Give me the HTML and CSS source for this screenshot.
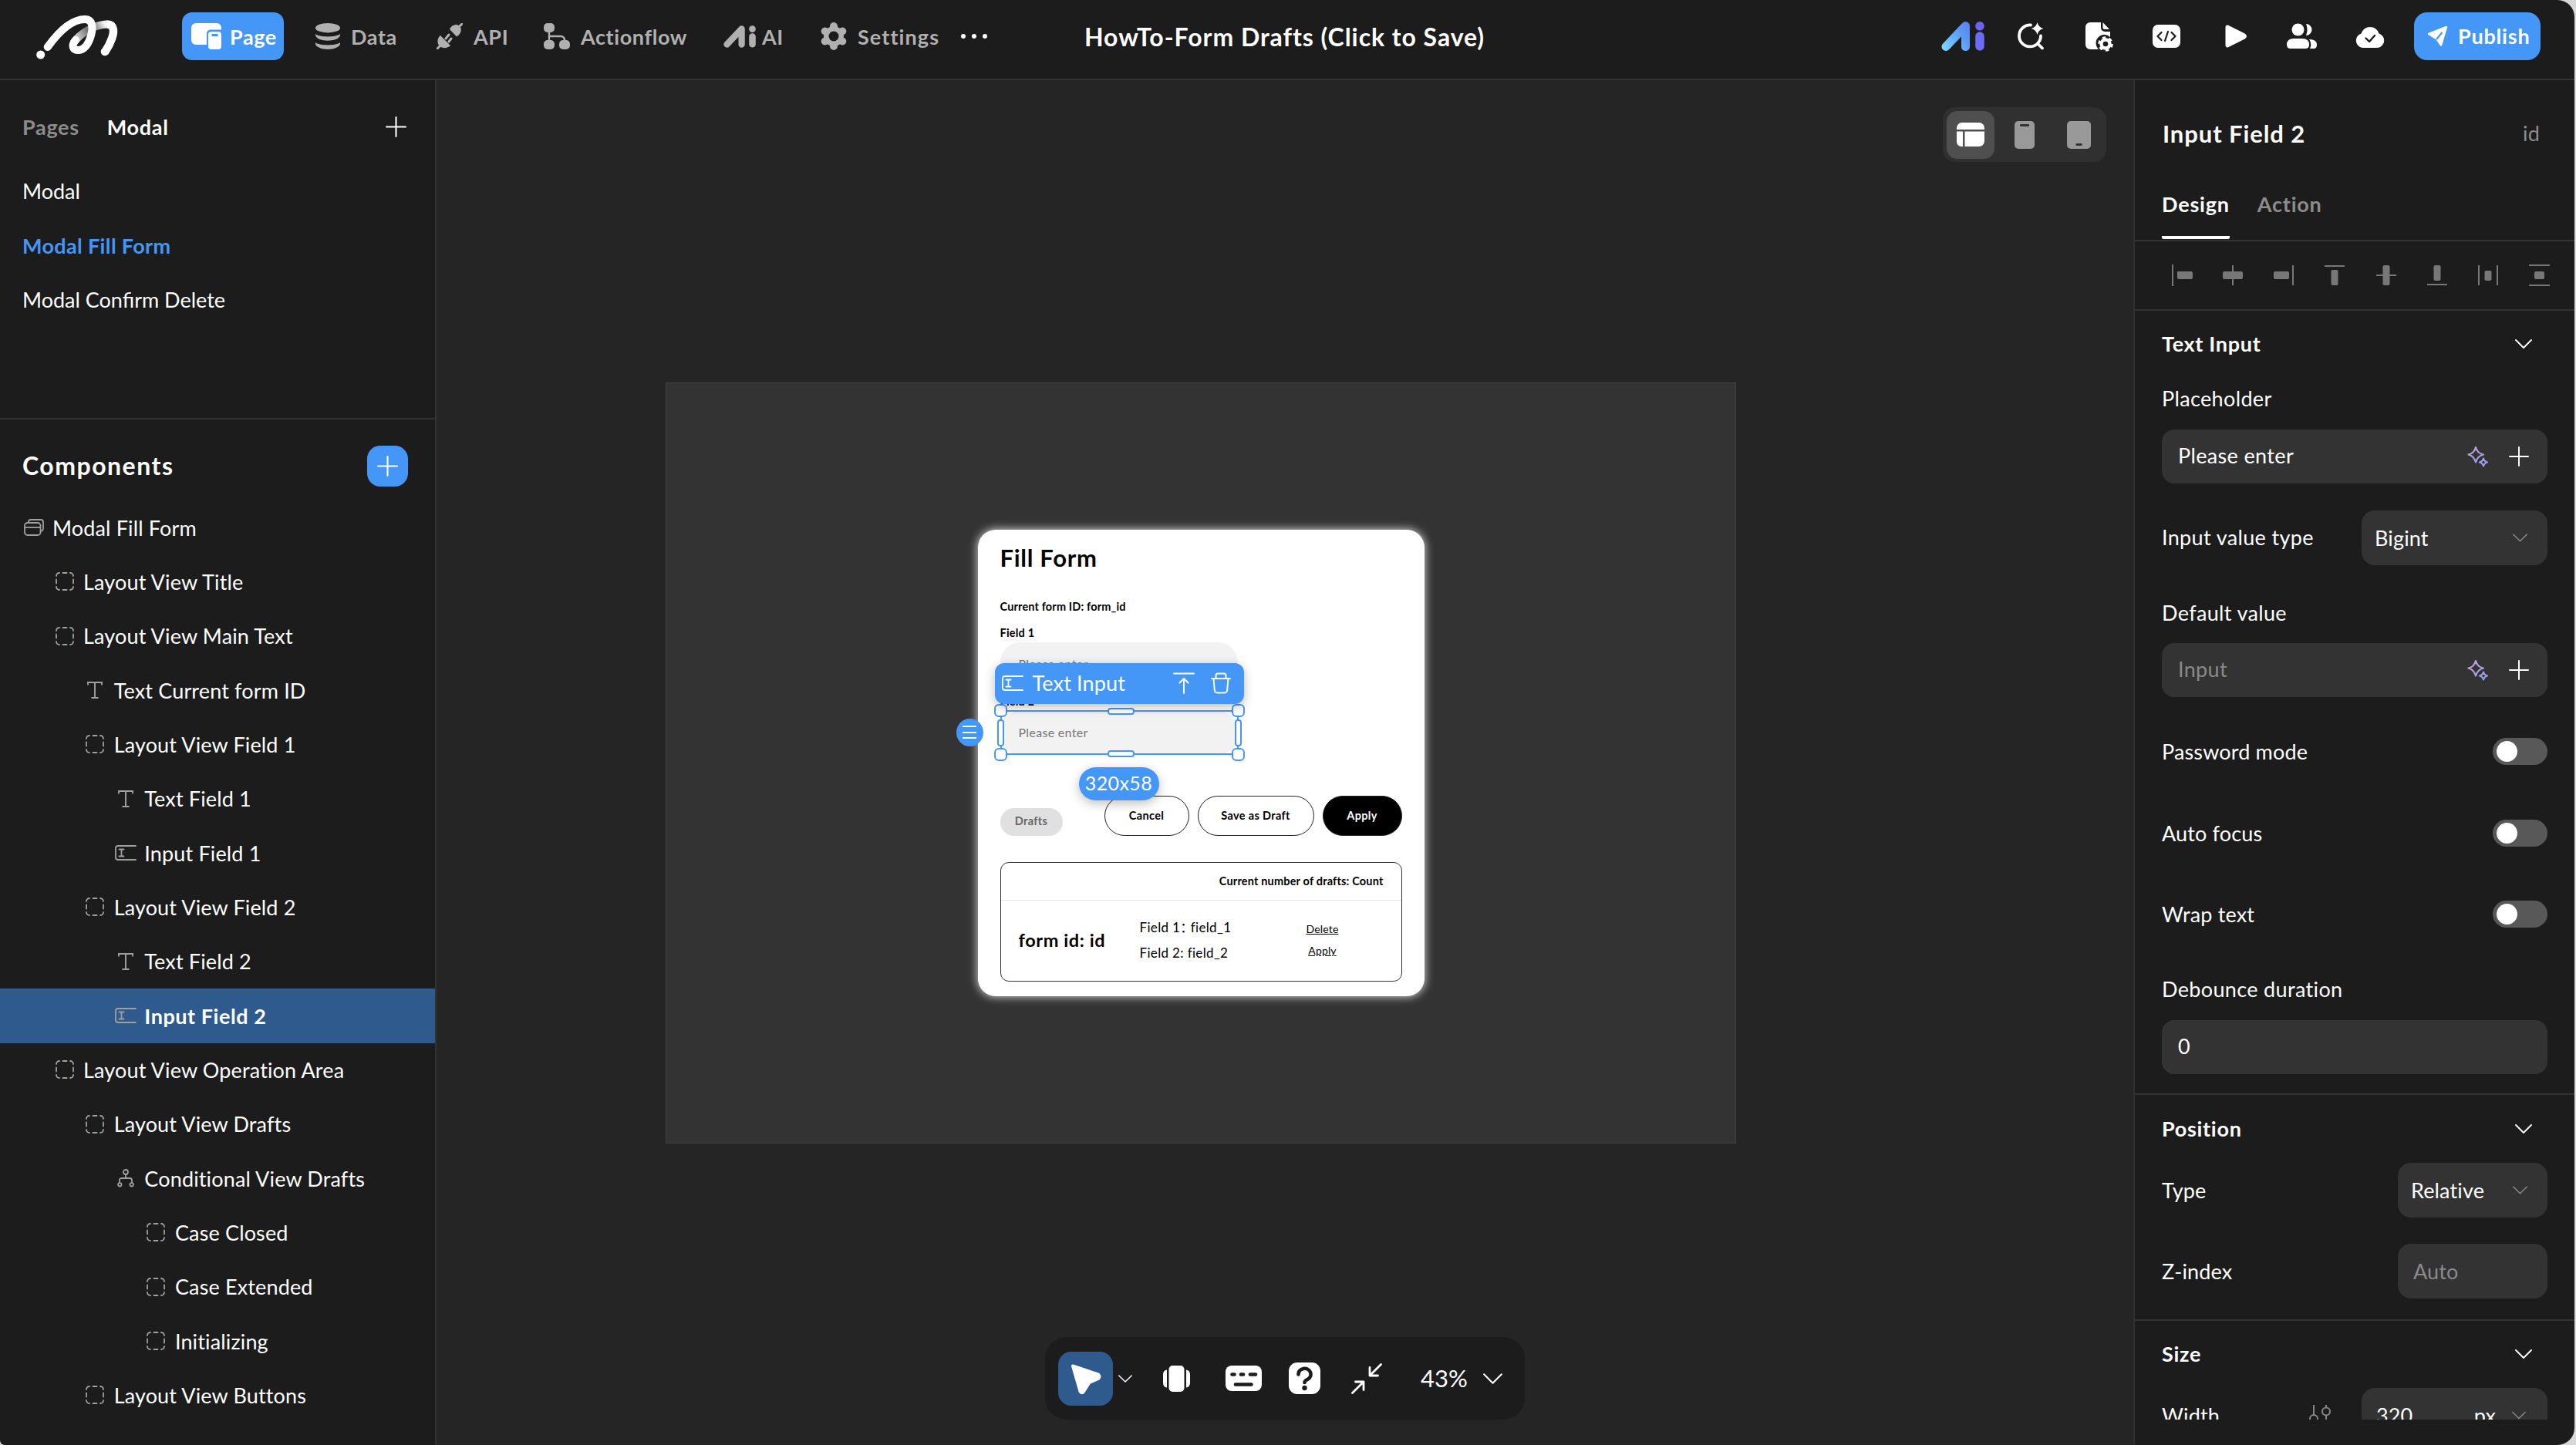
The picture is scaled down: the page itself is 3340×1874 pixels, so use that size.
FILE: index.html
```html
<!DOCTYPE html>
<html lang="en">
<head>
  <meta charset="UTF-8">
  <title>HowTo-Form Drafts</title>
  <link rel="stylesheet" href="styles.css">
</head>
<body>
  <svg class="defs" width="0" height="0">
    <defs>
      <linearGradient id="aiGrad" gradientUnits="userSpaceOnUse" x1="0" y1="38" x2="56" y2="0">
        <stop offset="0" stop-color="#7fdcff"/>
        <stop offset="0.5" stop-color="#5a9bf5"/>
        <stop offset="1" stop-color="#6f5cf2"/>
      </linearGradient>
      <linearGradient id="sparkGrad" x1="0" y1="0" x2="1" y2="1">
        <stop offset="0" stop-color="#c9a0dc"/>
        <stop offset="1" stop-color="#8f9bea"/>
      </linearGradient>
      <linearGradient id="foldGrad" gradientUnits="userSpaceOnUse" x1="50" y1="42" x2="94" y2="17">
        <stop offset="0" stop-color="#fff"/>
        <stop offset="0.5" stop-color="#777"/>
        <stop offset="0.75" stop-color="#999"/>
        <stop offset="1" stop-color="#fff"/>
      </linearGradient>
    </defs>
    <symbol id="i-ai" viewBox="0 0 56 38">
      <path d="M6 32.500L31.500 5.500V32.500" fill="none" stroke="currentColor" stroke-width="11" stroke-linecap="round" stroke-linejoin="round"/>
      <path d="M50 19V32" stroke="currentColor" stroke-width="11.500" stroke-linecap="round"/>
      <circle cx="50" cy="5.800" r="5.800" fill="currentColor"/>
    </symbol>
    <symbol id="i-layout" viewBox="0 0 24 24">
      <path d="M9.500 1h5M9.500 23h5M1 9.500v5M23 9.500v5M1 5a4 4 0 0 1 4-4M19 1a4 4 0 0 1 4 4M23 19a4 4 0 0 1-4 4M5 23a4 4 0 0 1-4-4" fill="none" stroke="currentColor" stroke-width="1.800" stroke-linecap="round"/>
    </symbol>
    <symbol id="i-text" viewBox="0 0 24 24">
      <path d="M3 5.500V2h18v3.500M12 2v20M7.500 22h9" fill="none" stroke="currentColor" stroke-width="1.900"/>
    </symbol>
    <symbol id="i-input" viewBox="0 0 28 20">
      <path d="M27 1H4a3 3 0 0 0-3 3v12a3 3 0 0 0 3 3h23M5.500 5.500h6M5.500 14.500h6M8.500 5.500v9" fill="none" stroke="currentColor" stroke-width="1.800" stroke-linecap="round"/>
    </symbol>
    <symbol id="i-modal" viewBox="0 0 26 22">
      <path d="M6 4.500V4a3 3 0 0 1 3-3h13a3 3 0 0 1 3 3v8a4 4 0 0 1-3.500 4" fill="none" stroke="currentColor" stroke-width="1.800"/>
      <rect x="1" y="5" width="20.500" height="16" rx="3.500" fill="none" stroke="currentColor" stroke-width="1.800"/>
      <path d="M1 11h20" stroke="currentColor" stroke-width="1.800"/>
    </symbol>
    <symbol id="i-cond" viewBox="0 0 22 24">
      <path d="M11 7v5M3 18v-3.500A2.500 2.500 0 0 1 5.500 12h11a2.500 2.500 0 0 1 2.500 2.500V18" fill="none" stroke="currentColor" stroke-width="1.800"/>
      <circle cx="11" cy="4" r="3" fill="none" stroke="currentColor" stroke-width="1.800"/>
      <circle cx="3.300" cy="20.300" r="2.200" fill="none" stroke="currentColor" stroke-width="1.800"/>
      <circle cx="18.700" cy="20.300" r="2.200" fill="none" stroke="currentColor" stroke-width="1.800"/>
    </symbol>
    <symbol id="i-plus" viewBox="0 0 26 26">
      <path d="M13 1v24M1 13h24" stroke="currentColor" stroke-width="2" stroke-linecap="round"/>
    </symbol>
    <symbol id="i-chevron" viewBox="0 0 22 12">
      <path d="M1 1l10 10L21 1" fill="none" stroke="currentColor" stroke-width="1.800" stroke-linecap="round" stroke-linejoin="round"/>
    </symbol>
    <symbol id="i-spark" viewBox="0 0 28 28">
      <path d="M11 2Q13 10 21 11.500Q13 13.500 11 21.500Q9 13.500 1.500 11.500Q9 10 11 2ZM21 16.500Q22 20.500 26 21.500Q22 22.500 21 26.500Q20 22.500 16 21.500Q20 20.500 21 16.500Z" fill="none" stroke="url(#sparkGrad)" stroke-width="2.200" stroke-linejoin="round"/>
    </symbol>
  </svg>

  <div class="app">
    <header class="topbar">
      <svg class="logo" width="112" height="64" viewBox="0 0 112 64">
        <path d="M51 41C58 31 74 18 94 16.500" fill="none" stroke="url(#foldGrad)" stroke-width="10"/>
        <path d="M17.700 46C30 29 47 10 66 10C76 10 77 20 74 31C71 42 65 50 58 50C50 50 48 44 54 37" fill="none" stroke="#fff" stroke-width="10" stroke-linecap="round"/>
        <path d="M94 16.500C105 16 104 27 101 35Q98 44 92 52.500" fill="none" stroke="#fff" stroke-width="10.500"/>
        <circle cx="92" cy="52" r="5.300" fill="#fff"/>
        <circle cx="8.700" cy="56" r="5.500" fill="#fff"/>
      </svg>

      <nav class="nav">
        <a class="nav-item active">
          <svg width="40" height="34" viewBox="0 0 40 34">
            <path d="M6 0H33a6 6 0 0 1 6 6V8.500H25a5 5 0 0 0-5 5V28H6a6 6 0 0 1-6-6V6a6 6 0 0 1 6-6Z" fill="#fff"/>
            <path fill-rule="evenodd" d="M26 11H35a4 4 0 0 1 4 4V30a4 4 0 0 1-4 4H26a4 4 0 0 1-4-4V15a4 4 0 0 1 4-4ZM26.500 14v3h8v-3Z" fill="#fff"/>
          </svg>
          <span>Page</span>
        </a>
        <a class="nav-item">
          <svg width="32" height="34" viewBox="0 0 32 34" fill="currentColor">
            <ellipse cx="16" cy="6.200" rx="16" ry="6.200"/>
            <path d="M0 14C4 18.500 28 18.500 32 14C34 25.500-2 25.500 0 14ZM0 25C4 29.500 28 29.500 32 25C34 37-2 37 0 25Z"/>
          </svg>
          <span>Data</span>
        </a>
        <a class="nav-item">
          <svg width="34" height="34" viewBox="0 0 34 34" fill="currentColor">
            <path d="M33 1l-4 4M1 33l4-4M12 20l4-5M16 24l3-4" stroke="currentColor" stroke-width="3" stroke-linecap="round"/>
            <path d="M17 8C19 2 27 0 30 4C34 8 31 15 26 17.500ZM5 16L18 29C14 33 8 33 4 30C0 26 1 19 5 16Z"/>
          </svg>
          <span>API</span>
        </a>
        <a class="nav-item">
          <svg width="34" height="34" viewBox="0 0 34 34" fill="currentColor">
            <rect x="0" y="0" width="14" height="12" rx="5"/>
            <rect x="0" y="22" width="14" height="12" rx="5"/>
            <rect x="20" y="22" width="14" height="12" rx="5"/>
            <path d="M7 8V26M7 17H22a5 5 0 0 1 5 5V25" fill="none" stroke="currentColor" stroke-width="2.400"/>
          </svg>
          <span>Actionflow</span>
        </a>
        <a class="nav-item ai">
          <svg width="42" height="29"><use href="#i-ai"/></svg>
          <span>AI</span>
        </a>
        <a class="nav-item settings">
          <svg width="36" height="36" viewBox="0 0 36 36">
            <path d="M18 5V31M6.700 11.500L29.300 24.500M6.700 24.500L29.300 11.500" stroke="currentColor" stroke-width="10" stroke-linecap="round"/>
            <circle cx="18" cy="18" r="13" fill="currentColor"/>
            <circle cx="18" cy="18" r="6.500" fill="#1c1c1c"/>
          </svg>
          <span>Settings</span>
        </a>
        <a class="more"><i></i><i></i><i></i></a>
      </nav>

      <h1 class="project-title">HowTo-Form Drafts (Click to Save)</h1>

      <div class="tools">
        <svg width="56" height="38" viewBox="0 0 56 38">
          <path d="M6 32.500L31.500 5.500V32.500" fill="none" stroke="url(#aiGrad)" stroke-width="11" stroke-linecap="round" stroke-linejoin="round"/>
          <path d="M50 19V32" stroke="#6b6cf5" stroke-width="11.500" stroke-linecap="round"/>
          <circle cx="50" cy="5.800" r="5.800" fill="#6b63f3"/>
        </svg>
        <svg width="56" height="40" viewBox="0 0 56 40">
          <path d="M28 5.500A14 14 0 1 0 41 19.500M37 29.500l6 6" fill="none" stroke="#fff" stroke-width="3.800" stroke-linecap="round"/>
          <path d="M36.500 2Q38 8.500 44.500 10Q38 11.500 36.500 18Q35 11.500 28.500 10Q35 8.500 36.500 2Z" fill="#fff"/>
        </svg>
        <svg width="56" height="40" viewBox="0 0 56 40">
          <path d="M17 2H31V9a5 5 0 0 0 5 5H43V21A10 10 0 0 0 28 37H17a6 6 0 0 1-6-6V8a6 6 0 0 1 6-6Z" fill="#fff"/>
          <path d="M33.500 2L42 11H36a2.500 2.500 0 0 1-2.500-2.500Z" fill="#fff"/>
          <circle cx="37" cy="30" r="5.500" fill="none" stroke="#fff" stroke-width="4.400"/>
          <circle cx="37" cy="30" r="8.500" fill="none" stroke="#fff" stroke-width="2.600" stroke-dasharray="4.450 4.450"/>
        </svg>
        <svg width="56" height="40" viewBox="0 0 56 40">
          <rect x="10" y="5" width="36" height="30" rx="7" fill="#fff"/>
          <path d="M21.500 15l-5 5 5 5M34.500 15l5 5-5 5M30 14l-4 12" fill="none" stroke="#1c1c1c" stroke-width="2.200" stroke-linecap="round" stroke-linejoin="round"/>
        </svg>
        <svg width="56" height="40" viewBox="0 0 56 40">
          <path d="M19 8L40 18.500Q43 20 40 21.500L19 32Z" fill="#fff" stroke="#fff" stroke-width="5" stroke-linejoin="round"/>
        </svg>
        <svg width="56" height="40" viewBox="0 0 56 40" fill="#fff">
          <circle cx="22.500" cy="11.500" r="8"/>
          <path d="M8 31q0-8 9-8h11q9 0 9 8 0 5-5 5H13q-5 0-5-5Z"/>
          <path d="M33 4a7.500 7.500 0 0 1 0 15q3-7.500 0-15ZM37 24q10 0 10 7 0 5-4 5h-5q3-6-1-12Z"/>
        </svg>
        <svg width="56" height="40" viewBox="0 0 56 40">
          <path d="M18 35a9.500 9.500 0 0 1-1.500-18.500A12 12 0 0 1 39.500 16.500A9.500 9.500 0 0 1 38 35Z" fill="#fff"/>
          <path d="M22.500 22.500l4.500 4.500 7-8" fill="none" stroke="#1c1c1c" stroke-width="2.400" stroke-linecap="round" stroke-linejoin="round"/>
        </svg>
        <button class="publish">
          <svg width="28" height="28" viewBox="0 0 28 28">
            <path d="M2 11L25 2 18 25.500 12.500 17.500Z" fill="#fff" stroke="#fff" stroke-width="2.500" stroke-linejoin="round"/>
            <path d="M12.500 17.500L19 9.500" stroke="#4597f7" stroke-width="2" stroke-linecap="round"/>
          </svg>
          Publish
        </button>
      </div>
    </header>

    <div class="workspace">
      <aside class="sidebar">
        <section class="pages">
          <div class="pages-tabs">
            <span class="tab-off">Pages</span>
            <span class="tab-on">Modal</span>
            <svg class="add" width="27" height="27"><use href="#i-plus"/></svg>
          </div>
          <div class="page-row">Modal</div>
          <div class="page-row current">Modal Fill Form</div>
          <div class="page-row">Modal Confirm Delete</div>
        </section>

        <section class="components">
          <div class="components-head">
            <h2>Components</h2>
            <button class="add-btn"><svg width="27" height="27"><use href="#i-plus"/></svg></button>
          </div>
          <div class="tree">
            <div class="node"><svg width="26" height="22"><use href="#i-modal"/></svg>Modal Fill Form</div>
            <div class="node d1"><svg width="24" height="24"><use href="#i-layout"/></svg>Layout View Title</div>
            <div class="node d1"><svg width="24" height="24"><use href="#i-layout"/></svg>Layout View Main Text</div>
            <div class="node d2"><svg width="24" height="24"><use href="#i-text"/></svg>Text Current form ID</div>
            <div class="node d2"><svg width="24" height="24"><use href="#i-layout"/></svg>Layout View Field 1</div>
            <div class="node d3"><svg width="24" height="24"><use href="#i-text"/></svg>Text Field 1</div>
            <div class="node d3"><svg width="28" height="20"><use href="#i-input"/></svg>Input Field 1</div>
            <div class="node d2"><svg width="24" height="24"><use href="#i-layout"/></svg>Layout View Field 2</div>
            <div class="node d3"><svg width="24" height="24"><use href="#i-text"/></svg>Text Field 2</div>
            <div class="node d3 selected"><svg width="28" height="20"><use href="#i-input"/></svg>Input Field 2</div>
            <div class="node d1"><svg width="24" height="24"><use href="#i-layout"/></svg>Layout View Operation Area</div>
            <div class="node d2"><svg width="24" height="24"><use href="#i-layout"/></svg>Layout View Drafts</div>
            <div class="node d3"><svg width="22" height="24"><use href="#i-cond"/></svg>Conditional View Drafts</div>
            <div class="node d4"><svg width="24" height="24"><use href="#i-layout"/></svg>Case Closed</div>
            <div class="node d4"><svg width="24" height="24"><use href="#i-layout"/></svg>Case Extended</div>
            <div class="node d4"><svg width="24" height="24"><use href="#i-layout"/></svg>Initializing</div>
            <div class="node d2"><svg width="24" height="24"><use href="#i-layout"/></svg>Layout View Buttons</div>
          </div>
        </section>
      </aside>

      <main class="canvas">
        <div class="devices">
          <span class="device on">
            <svg width="36" height="32" viewBox="0 0 36 32" fill="#fff">
              <path d="M7 0H29a7 7 0 0 1 7 7V9H0V7A7 7 0 0 1 7 0ZM0 11.500H8V31H6a6 6 0 0 1-6-6ZM10.500 11.500H36V24a7 7 0 0 1-7 7H10.500Z"/>
            </svg>
          </span>
          <span class="device">
            <svg width="26" height="36" viewBox="0 0 26 36"><rect width="26" height="36" rx="5" fill="#999"/><rect x="7" y="4" width="12" height="3" rx="1" fill="#333"/></svg>
          </span>
          <span class="device">
            <svg width="31" height="36" viewBox="0 0 31 36"><rect width="31" height="36" rx="5" fill="#999"/><rect x="11.500" y="29" width="8" height="3" rx="1" fill="#333"/></svg>
          </span>
        </div>

        <div class="artboard">
          <div class="modal">
            <h3 class="modal-title">Fill Form</h3>
            <div class="label form-id">Current form ID: form_id</div>
            <div class="label">Field 1</div>
            <div class="field">Please enter</div>
            <div class="label second">Field 2</div>
            <div class="field">Please enter</div>
            <div class="actions">
              <span class="chip">Drafts</span>
              <span class="pill cancel">Cancel</span>
              <span class="pill save">Save as Draft</span>
              <span class="pill apply">Apply</span>
            </div>
            <div class="drafts">
              <div class="drafts-head">Current number of drafts: Count</div>
              <div class="drafts-row">
                <strong>form id: id</strong>
                <div class="draft-fields">
                  <div>Field 1：<span>field_1</span></div>
                  <div>Field 2: field_2</div>
                </div>
                <div class="draft-links">
                  <u>Delete</u>
                  <u>Apply</u>
                </div>
              </div>
            </div>

            <!-- selection overlay -->
            <div class="selection">
              <i class="bar top"></i><i class="bar bottom"></i>
              <i class="side left"></i><i class="side right"></i>
              <i class="knob nw"></i><i class="knob ne"></i>
              <i class="knob sw"></i><i class="knob se"></i>
            </div>
            <div class="sel-toolbar">
              <svg width="28" height="20"><use href="#i-input"/></svg>
              <span>Text Input</span>
              <svg class="up" width="28" height="28" viewBox="0 0 28 28"><path d="M1 1.500h26M14 27V8.500M8.500 13.500L14 8l5.500 5.500" fill="none" stroke="#fff" stroke-width="2" stroke-linecap="round" stroke-linejoin="round"/></svg>
              <svg width="26" height="28" viewBox="0 0 26 28"><path d="M1 8h24M6.500 8V4a2.500 2.500 0 0 1 2.500-2.500h8a2.500 2.500 0 0 1 2.500 2.500v4M3.500 8l1.300 15a4 4 0 0 0 4 3.500h8.400a4 4 0 0 0 4-3.500L22.500 8" fill="none" stroke="#fff" stroke-width="2" stroke-linecap="round"/></svg>
            </div>
            <div class="sel-menu"><i></i><i></i><i></i></div>
            <div class="sel-size">320x58</div>
          </div>
        </div>

        <div class="dock">
          <span class="dock-active">
            <svg width="42" height="42" viewBox="0 0 42 42"><path d="M4 4.500L37 15.500Q40 18 37 21L25.500 26 17.500 38.500Q15 40 13.500 37.500Z" fill="#fff" stroke="#fff" stroke-width="4" stroke-linejoin="round"/></svg>
          </span>
          <svg class="dock-caret" width="18" height="10"><use href="#i-chevron"/></svg>
          <svg class="dock-frame" width="35" height="34" viewBox="0 0 35 34" fill="#fff"><rect x="7.500" width="20" height="34" rx="5"/><path d="M5 5.500V28.500C1 28 0 25 0 22V12C0 9 1 6 5 5.500ZM30 5.500V28.500C34 28 35 25 35 22V12C35 9 34 6 30 5.500Z"/></svg>
          <svg class="dock-keys" width="47" height="33" viewBox="0 0 47 33">
            <rect width="47" height="33" rx="8" fill="#fff"/>
            <path d="M8.500 11.500h3M20 11.500h3M32 11.500h7M13 24.500h20.500" stroke="#1c1c1c" stroke-width="4.600" stroke-linecap="round"/>
          </svg>
          <svg class="dock-help" width="41" height="41" viewBox="0 0 41 41">
            <rect width="41" height="41" rx="11" fill="#fff"/>
            <path d="M12.500 15.500a8 7.500 0 1 1 12 6.300Q20.500 23.500 20.500 26" fill="none" stroke="#1c1c1c" stroke-width="4.600" stroke-linecap="round"/>
            <circle cx="20.500" cy="33" r="3.200" fill="#1c1c1c"/>
          </svg>
          <svg class="dock-fit" width="40" height="40" viewBox="0 0 40 40"><path d="M38.500 1.500L24 16M24 5.500V16H34.500M1.500 38.500L16 24M16 34.500V24H5.500" fill="none" stroke="#fff" stroke-width="2.800" stroke-linecap="round" stroke-linejoin="round"/></svg>
          <span class="zoom">43%</span>
          <svg width="25" height="14"><use href="#i-chevron"/></svg>
        </div>
      </main>

      <aside class="inspector">
        <div class="insp-scroll">
          <div class="insp-title"><h2>Input Field 2</h2><span>id</span></div>
          <div class="insp-tabs"><span class="on">Design</span><span>Action</span></div>
          <div class="align">
            <svg width="28" height="28" viewBox="0 0 28 28"><path d="M1 0h2v28H1zM8 9h18a2 2 0 0 1 2 2v6a2 2 0 0 1-2 2H10a2 2 0 0 1-2-2z"/></svg>
            <svg width="28" height="28" viewBox="0 0 28 28"><rect x="13" y="1" width="2" height="26"/><rect x="1" y="9" width="26" height="10" rx="2"/></svg>
            <svg width="28" height="28" viewBox="0 0 28 28"><rect x="25" y="1" width="2" height="26"/><rect x="1" y="9" width="20" height="10" rx="2"/></svg>
            <svg width="28" height="28" viewBox="0 0 28 28"><rect x="1" y="1" width="26" height="2"/><rect x="9.500" y="7" width="9" height="20" rx="2"/></svg>
            <svg width="28" height="28" viewBox="0 0 28 28"><rect x="1" y="13" width="26" height="2"/><rect x="9.500" y="1" width="9" height="26" rx="2"/></svg>
            <svg width="28" height="28" viewBox="0 0 28 28"><rect x="1" y="25" width="26" height="2"/><rect x="9.500" y="1" width="9" height="20" rx="2"/></svg>
            <svg width="28" height="28" viewBox="0 0 28 28"><rect x="1" y="1" width="2" height="26"/><rect x="25" y="1" width="2" height="26"/><rect x="9.500" y="8" width="9" height="13" rx="2"/></svg>
            <svg width="28" height="28" viewBox="0 0 28 28"><rect x="1" y="0" width="27" height="2"/><rect x="1" y="26" width="27" height="2"/><rect x="8" y="9" width="13" height="10" rx="2"/></svg>
          </div>

          <section class="group text-input">
            <div class="group-head"><h3>Text Input</h3><svg width="22" height="12"><use href="#i-chevron"/></svg></div>
            <div class="prop-label">Placeholder</div>
            <div class="box"><span>Please enter</span><svg width="28" height="28"><use href="#i-spark"/></svg><svg width="26" height="26"><use href="#i-plus"/></svg></div>
            <div class="prop select-row"><span>Input value type</span><div class="select wide">Bigint<svg width="19" height="11"><use href="#i-chevron"/></svg></div></div>
            <div class="prop-label default">Default value</div>
            <div class="box empty"><span>Input</span><svg width="28" height="28"><use href="#i-spark"/></svg><svg width="26" height="26"><use href="#i-plus"/></svg></div>
            <div class="prop first-toggle"><span>Password mode</span><i class="toggle"></i></div>
            <div class="prop"><span>Auto focus</span><i class="toggle"></i></div>
            <div class="prop"><span>Wrap text</span><i class="toggle"></i></div>
            <div class="prop-label debounce">Debounce duration</div>
            <div class="box"><span>0</span></div>
          </section>

          <section class="group position">
            <div class="group-head"><h3>Position</h3><svg width="22" height="12"><use href="#i-chevron"/></svg></div>
            <div class="prop"><span>Type</span><div class="select">Relative<svg width="19" height="11"><use href="#i-chevron"/></svg></div></div>
            <div class="prop"><span>Z-index</span><div class="select auto">Auto</div></div>
          </section>

          <section class="group size">
            <div class="group-head"><h3>Size</h3><svg width="22" height="12"><use href="#i-chevron"/></svg></div>
            <div class="prop">
              <span>Width</span>
              <svg class="tune" width="28" height="30" viewBox="0 0 28 30" fill="none" stroke="#888" stroke-width="2"><path d="M6 1v13M6 24v5M22 1v4M22 14v15"/><circle cx="6" cy="19" r="5"/><circle cx="22" cy="9.500" r="5"/></svg>
              <div class="select wide width">320<b>px</b><svg width="18" height="11"><use href="#i-chevron"/></svg></div>
            </div>
          </section>
        </div>
      </aside>
    </div>
  </div>
</body>
</html>
```
FILE: styles.css
```css
* {
  box-sizing: border-box;
}

body {
  margin: 0;
  background: #d8d8d8;
  font-family: Lato, "Noto Sans CJK SC", sans-serif;
  font-size: 27px;
  letter-spacing: 0.15px;
  color: #fff;
  overflow: hidden;
}

h1, h2, h3 {
  margin: 0;
}

svg {
  display: block;
  flex: none;
}

button {
  border: none;
  padding: 0;
  color: #fff;
  font: inherit;
}

.defs {
  position: absolute;
}

.app {
  width: 3338px;
  height: 1874px;
  display: flex;
  flex-direction: column;
  background: #1c1c1c;
  border-radius: 0 22px 22px 6px;
  overflow: hidden;
}

/* top bar */
.topbar {
  height: 104px;
  flex: none;
  display: flex;
  align-items: center;
  padding: 0 44px 8px;
  border-bottom: 2px solid #333;
}

.logo {
  margin-right: 80px;
}

.nav {
  display: grid;
  grid-template-columns: 173px 157px 139px 233px 125px 183px 36px;
  align-items: center;
  color: #b0b0b0;
  font-weight: bold;
  letter-spacing: 0.6px;
}

.nav-item {
  display: flex;
  align-items: center;
  gap: 14px;
}

.nav-item.ai {
  gap: 8px;
}

.nav-item.settings {
  gap: 13px;
  letter-spacing: 1.1px;
}

.nav-item.active {
  width: 132px;
  height: 62px;
  padding-left: 12px;
  gap: 10px;
  border-radius: 13px;
  background: #4597f7;
  color: #fff;
}

.more {
  display: flex;
  gap: 8px;
}

.more i {
  width: 6px;
  height: 6px;
  border-radius: 50%;
  background: #fff;
}

.project-title {
  margin-left: 124px;
  width: 524px;
  font-size: 32px;
  letter-spacing: 0.95px;
  white-space: nowrap;
}

.tools {
  display: flex;
  align-items: center;
  gap: 32px;
  margin-left: auto;
}

.publish {
  width: 164px;
  height: 62px;
  margin-left: -3px;
  display: flex;
  align-items: center;
  padding: 0 0 1px 17px;
  gap: 12px;
  border-radius: 17px;
  background: #4597f7;
  font-weight: bold;
  letter-spacing: 0.8px;
}

/* left sidebar */
.workspace {
  flex: 1;
  display: flex;
  min-height: 0;
}

.sidebar {
  width: 566px;
  flex: none;
  border-right: 2px solid #333;
}

.pages {
  height: 440px;
  padding-top: 26px;
  border-bottom: 2px solid #333;
}

.pages-tabs {
  height: 71px;
  margin-bottom: 1px;
  padding: 0 37px 2px 29px;
  display: flex;
  align-items: center;
  gap: 36px;
  font-weight: bold;
  letter-spacing: 0.7px;
}

.tab-off {
  color: #8c8c8c;
}

.add {
  margin-left: auto;
}

.page-row {
  height: 70.500px;
  padding-left: 29px;
  line-height: 91px;
  letter-spacing: 0;
}

.current {
  color: #4597f7;
  font-weight: bold;
  letter-spacing: 0.35px;
}

.components-head {
  height: 105.500px;
  display: flex;
  align-items: center;
  justify-content: space-between;
  padding: 16px 35px 0 29px;
}

.components-head h2 {
  font-size: 32px;
  line-height: 36px;
  padding-bottom: 2px;
  letter-spacing: 1.500px;
}

.add-btn {
  width: 53px;
  height: 53px;
  display: flex;
  align-items: center;
  justify-content: center;
  border-radius: 17px;
  background: #4597f7;
}

.tree {
  --step: 39.600px;
}

.node {
  height: 70.330px;
  display: flex;
  align-items: center;
  padding-left: 68px;
  padding-bottom: 1px;
}

.node svg {
  width: 28px;
  margin-left: -38.500px;
  margin-right: 10.500px;
  color: #a0a0a0;
}

.d1 { padding-left: calc(68.500px + var(--step)); }
.d2 { padding-left: calc(68.500px + var(--step) * 2); }
.d3 { padding-left: calc(68.500px + var(--step) * 3); }
.d4 { padding-left: calc(68.500px + var(--step) * 4); }

.selected {
  background: #2f5a8d;
  font-weight: bold;
  letter-spacing: 0.55px;
}

/* canvas */
.canvas {
  position: relative;
  flex: 1;
  display: flex;
  align-items: center;
  padding-left: 297px;
  background: #252525;
}

.devices {
  position: absolute;
  top: 35px;
  right: 35px;
  width: 212px;
  height: 71px;
  display: flex;
  align-items: center;
  padding-left: 5px;
  gap: 8px;
  border-radius: 16px;
  background: #303030;
}

.device {
  width: 62px;
  height: 62px;
  display: flex;
  align-items: center;
  justify-content: center;
  border-radius: 14px;
}

.device.on {
  background: #4f4f4f;
}

.artboard {
  width: 1388px;
  height: 987px;
  display: flex;
  align-items: center;
  justify-content: center;
  background: #333;
  border: 1px solid #414141;
}

.modal {
  position: relative;
  width: 579px;
  height: 605px;
  padding: 0 29px;
  border-radius: 23px;
  background: #fff;
  box-shadow: 0 0 12px 1px rgba(255, 255, 255, 0.75);
  color: #000;
}

.modal-title {
  height: 91px;
  padding-top: 18px;
  font-size: 31px;
  line-height: 37px;
  letter-spacing: 0.7px;
}

.label {
  height: 34px;
  font-size: 14.500px;
  font-weight: bold;
  line-height: 17px;
  letter-spacing: 0.2px;
}

.label.form-id {
  letter-spacing: 0.15px;
}

.label:nth-of-type(2) {
  height: 21px;
}

.label.second {
  height: 20px;
  margin-top: 12px;
  line-height: 15px;
}

.field {
  width: 308px;
  height: 57px;
  padding-left: 24px;
  border-radius: 26px;
  background: #f2f2f2;
  color: #777;
  font-size: 16px;
  line-height: 55px;
  letter-spacing: 0.3px;
}

.actions {
  display: flex;
  align-items: flex-end;
  margin-top: 53px;
  height: 52px;
  font-size: 14.500px;
  font-weight: bold;
  letter-spacing: 0.35px;
}

.chip {
  width: 81px;
  height: 36px;
  border-radius: 18px;
  background: #e0e0e0;
  color: #666;
  line-height: 34px;
  text-align: center;
}

.pill {
  height: 52px;
  border: 1px solid #222;
  border-radius: 26px;
  line-height: 49px;
  text-align: center;
}

.cancel {
  width: 110px;
  margin-left: 54px;
}

.save {
  width: 151px;
  margin: 0 11px;
}

.apply {
  width: 103px;
  background: #000;
  color: #fff;
}

.drafts {
  width: 521px;
  height: 155px;
  margin-top: 34px;
  border: 1px solid #333;
  border-radius: 11px;
}

.drafts-head {
  height: 49px;
  padding-right: 23px;
  border-bottom: 1px solid #e4e4e4;
  font-size: 14.500px;
  font-weight: bold;
  line-height: 48px;
  letter-spacing: 0.18px;
  text-align: right;
}

.drafts-row {
  display: flex;
  align-items: center;
  height: 104px;
  padding: 0 0 2px 23px;
  font-size: 17px;
}

.drafts-row strong {
  width: 157px;
  font-size: 23.500px;
  letter-spacing: 0.6px;
}

.draft-fields {
  width: 190px;
  line-height: 33px;
  letter-spacing: 0.35px;
}

.draft-fields span {
  margin-left: -4px;
}

.draft-links {
  width: 94px;
  display: flex;
  flex-direction: column;
  align-items: center;
  font-size: 14px;
  line-height: 28px;
}

/* selected component overlay, sits on top of the form */
.selection {
  position: absolute;
  left: 29px;
  top: 234px;
  width: 309px;
  height: 58px;
  border: 2px solid #4597f7;
}

.selection i {
  position: absolute;
  border: 2px solid #4597f7;
  background: #fff;
}

.knob { width: 17px; height: 17px; border-radius: 6px; }
.nw { left: -10px; top: -10px; }
.ne { right: -10px; top: -10px; }
.sw { left: -10px; bottom: -10px; }
.se { right: -10px; bottom: -10px; }

.bar { left: 137px; width: 35px; height: 9px; border-radius: 4px; }
.top { top: -5px; }
.bottom { bottom: -5px; }

.side { top: 10px; width: 9px; height: 35px; border-radius: 4px; }
.left { left: -6px; }
.right { right: -6px; }

.sel-toolbar {
  position: absolute;
  left: 22px;
  top: 173px;
  width: 323px;
  height: 53px;
  display: flex;
  align-items: center;
  padding: 0 0 1px 9px;
  border-radius: 12px;
  background: #4597f7;
  color: #fff;
  box-shadow: 0 4px 14px rgba(0, 0, 0, 0.25);
}

.sel-toolbar span {
  width: 182px;
  margin-left: 12px;
}

.sel-toolbar .up {
  margin-right: 21px;
}

.sel-menu {
  position: absolute;
  left: -28px;
  top: 245px;
  width: 35px;
  height: 36px;
  display: flex;
  flex-direction: column;
  align-items: center;
  justify-content: center;
  gap: 5.500px;
  border-radius: 50%;
  background: #4597f7;
}

.sel-menu i {
  width: 18px;
  height: 2px;
  background: #fff;
}

.sel-size {
  position: absolute;
  left: 131px;
  top: 308px;
  width: 104px;
  height: 43px;
  border-radius: 22px;
  background: #4597f7;
  color: #fff;
  box-shadow: 0 4px 14px rgba(0, 0, 0, 0.25);
  font-size: 25px;
  line-height: 41px;
  letter-spacing: 0.4px;
  text-align: center;
}

.dock {
  position: absolute;
  left: 789px;
  bottom: 33px;
  width: 622px;
  height: 107px;
  display: flex;
  align-items: center;
  padding-left: 17px;
  border-radius: 28px;
  background: #1c1c1c;
}

.dock-active {
  width: 71px;
  height: 70px;
  display: flex;
  align-items: center;
  justify-content: center;
  border-radius: 17px;
  background: #2f5a8d;
}

.dock-caret { margin-left: 7px; }
.dock-frame { margin-left: 40px; }
.dock-keys { margin-left: 46px; }
.dock-help { margin-left: 35px; }
.dock-fit { margin-left: 40px; }

.zoom {
  width: 81px;
  margin-left: 50px;
  padding-bottom: 2px;
  font-size: 31px;
  letter-spacing: 0;
}

/* right inspector */
.inspector {
  width: 572px;
  flex: none;
  border-left: 2px solid #303030;
}

.insp-scroll {
  height: 1737px;
  overflow: hidden;
}

.insp-title {
  height: 126px;
  display: flex;
  align-items: center;
  justify-content: space-between;
  padding: 11px 45px 0 36px;
}

.insp-title h2 {
  font-size: 31px;
  letter-spacing: 0.9px;
}

.insp-title span {
  color: #8c8c8c;
}

.insp-tabs {
  height: 83px;
  display: flex;
  gap: 36px;
  padding-left: 35px;
  border-bottom: 2px solid #333;
  color: #8c8c8c;
  font-weight: bold;
  line-height: 69px;
  letter-spacing: 0.8px;
}

.insp-tabs .on {
  height: 80px;
  border-bottom: 4px solid #fff;
  border-radius: 2px;
  color: #fff;
}

.align {
  height: 90px;
  display: flex;
  align-items: center;
  justify-content: space-between;
  padding: 0 32px 0 47px;
  border-bottom: 2px solid #333;
  fill: #777;
}

.group {
  padding: 0 35px;
  border-bottom: 2px solid #333;
}

.text-input { height: 1017px; }
.position { height: 293px; }
.size { border: none; }

.group-head {
  height: 85px;
  display: flex;
  align-items: center;
  justify-content: space-between;
  padding-right: 20px;
}

.group-head h3 {
  font-size: 27px;
  letter-spacing: 0.7px;
}

.prop-label {
  height: 69px;
  line-height: 57px;
  letter-spacing: 0.35px;
}

.prop-label.default {
  margin-top: 34px;
  height: 67px;
  line-height: 55px;
}

.prop-label.debounce {
  height: 69px;
  margin-top: 15px;
}

.box {
  height: 70px;
  display: flex;
  align-items: center;
  padding: 0 24px 0 21px;
  border-radius: 16px;
  background: #333;
}

.box span {
  flex: 1;
  padding-bottom: 3px;
  letter-spacing: 0.35px;
}

.box svg + svg {
  margin-left: 26px;
}

.box.empty span {
  color: #8a8a8a;
}

.prop {
  height: 105.500px;
  display: flex;
  align-items: center;
  justify-content: space-between;
}

.select-row {
  height: 71px;
  margin-top: 35px;
}

.select-row > span {
  padding-bottom: 2px;
  letter-spacing: 0.35px;
}

.first-toggle {
  margin-top: 18px;
}

.select {
  width: 194px;
  height: 71px;
  display: flex;
  align-items: center;
  justify-content: space-between;
  padding: 0 26px 1px 17px;
  border-radius: 17px;
  background: #333;
}

.select svg {
  color: #888;
}

.select.wide {
  width: 241px;
}

.select.auto {
  padding-left: 20px;
  color: #8a8a8a;
}

.select.width {
  padding-left: 19px;
  padding-right: 28px;
}

.width b {
  margin-left: auto;
  margin-right: 21px;
  font-weight: normal;
}

.tune {
  margin-left: auto;
  margin-right: 40px;
}

.toggle {
  width: 71px;
  height: 35px;
  padding: 4px 5px;
  border-radius: 18px;
  background: #585858;
}

.toggle::before {
  content: "";
  display: block;
  width: 27px;
  height: 27px;
  border-radius: 50%;
  background: #fff;
}

.position .prop {
  height: 105px;
}

.position .group-head {
  height: 71px;
  padding-top: 16px;
}

/* last row runs under the panel's bottom edge */
.size .prop {
  height: 105px;
  margin-top: -15px;
}
```
